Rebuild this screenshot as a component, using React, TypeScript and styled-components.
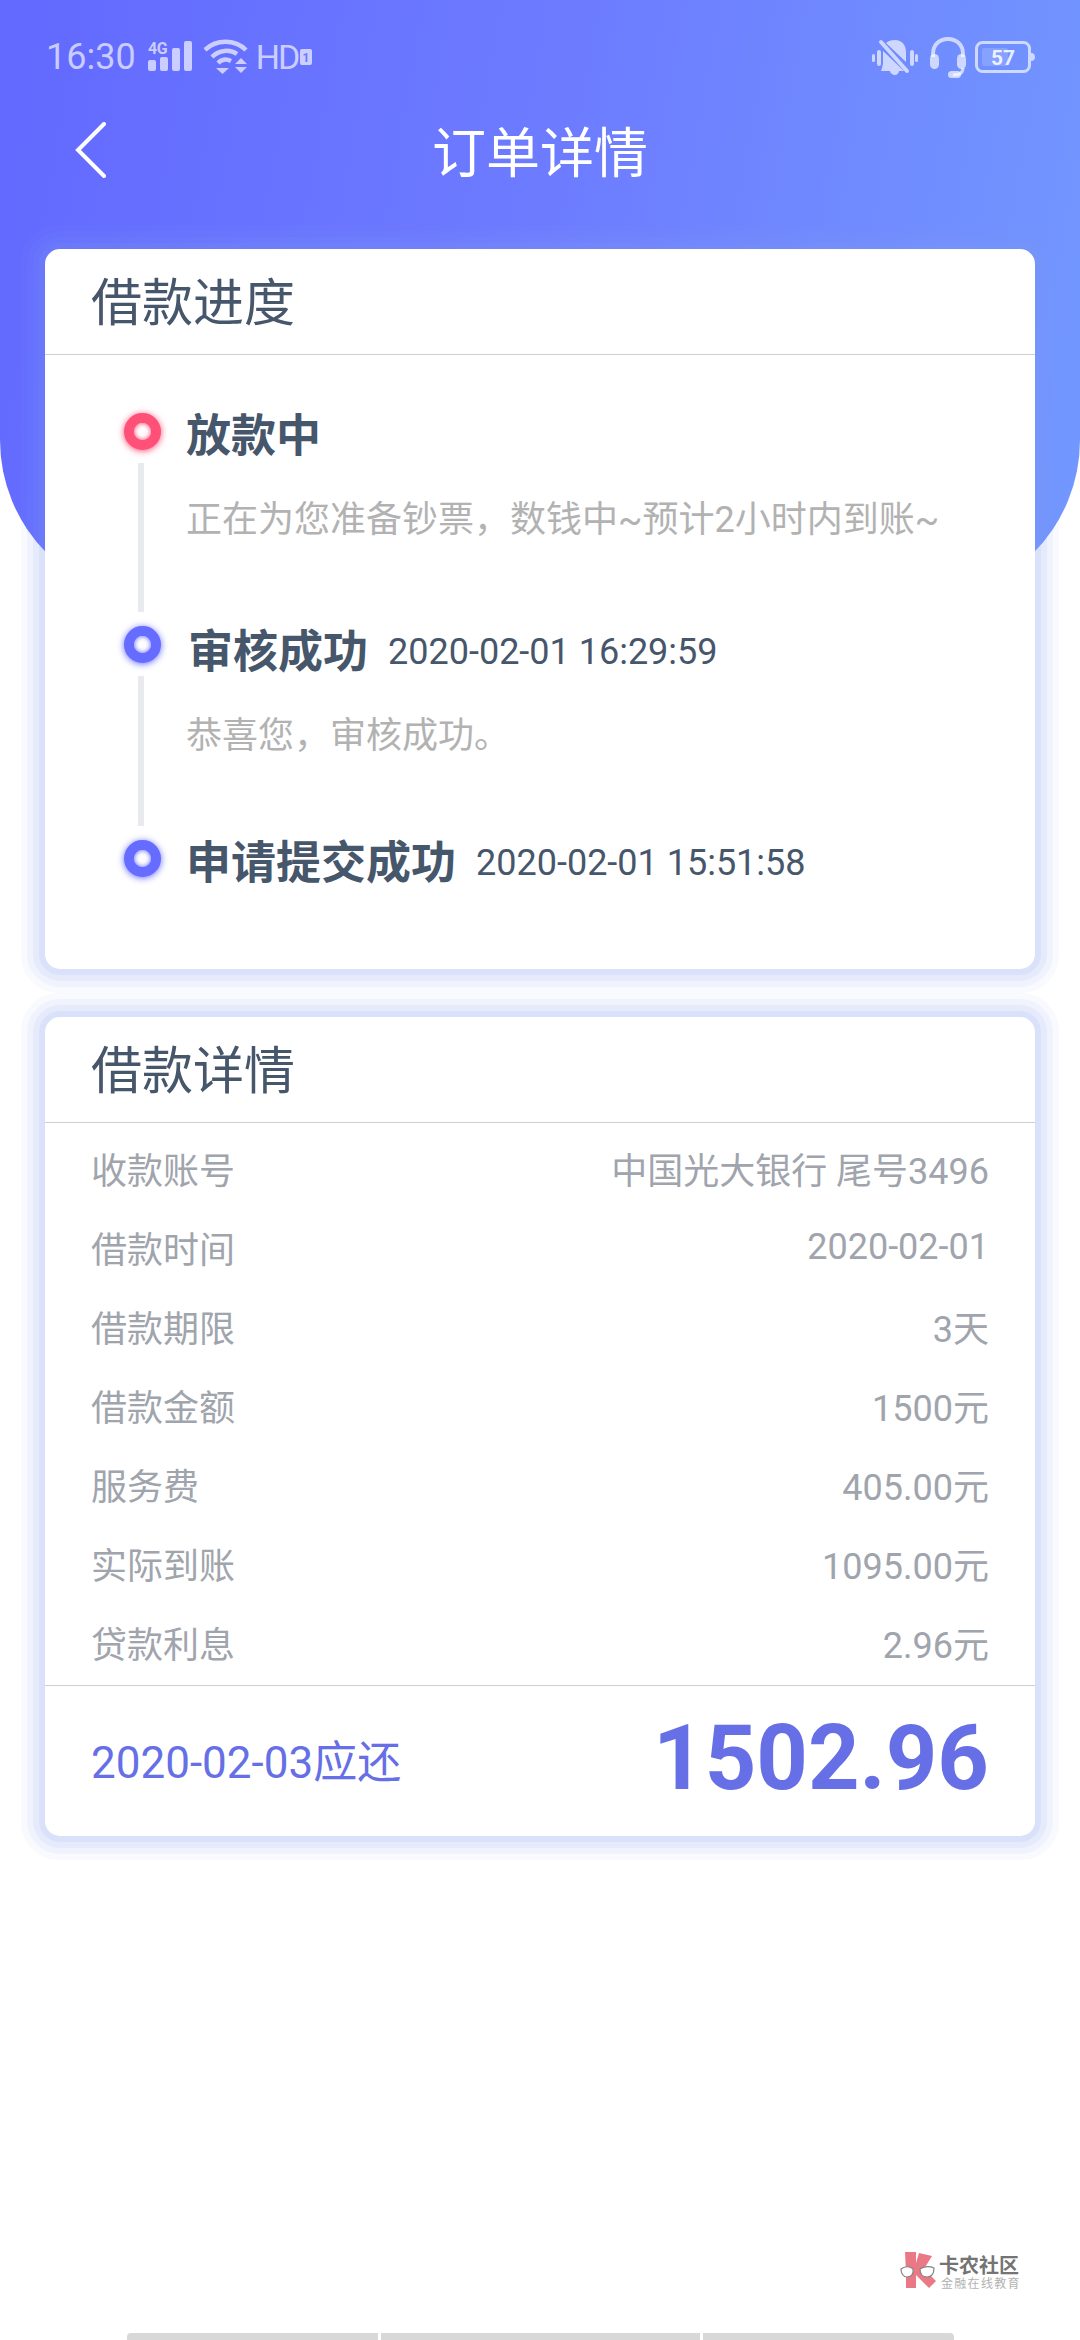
import React from "react";
import styled, { createGlobalStyle } from "styled-components";

const GlobalStyle = createGlobalStyle`
  html, body {
    margin: 0;
    padding: 0;
    background: #fff;
  }
  * {
    box-sizing: border-box;
  }
  body {
    font-family: Roboto, "Noto Sans CJK SC", sans-serif;
  }
`;

const Page = styled.div`
  position: relative;
  width: 1080px;
  height: 2340px;
  overflow: hidden;
  background: #fff;
`;

const Hero = styled.header`
  height: 600px;
  background: linear-gradient(100deg, #6269ff 0%, #6d7cff 50%, #7298ff 100%);
  border-radius: 0 0 160px 160px;
`;

const StatusBar = styled.div`
  height: 114px;
  padding: 0 45px 0 46px;
  display: flex;
  align-items: center;
  justify-content: space-between;
  color: rgba(255, 255, 255, 0.66);
`;

const StatusGroup = styled.div`
  display: flex;
  align-items: center;
  gap: ${(p: { $gap: number }) => p.$gap}px;
`;

const Clock = styled.span`
  font-size: 36px;
  line-height: 1;
`;

const Hd = styled.span`
  font-size: 34px;
  line-height: 1;
  letter-spacing: -2px;
  margin-left: -4px;
`;

const NavBar = styled.nav`
  height: 72px;
  padding: 0 75px;
  display: grid;
  grid-template-columns: 1fr auto 1fr;
  align-items: center;
`;

const PageTitle = styled.h1`
  margin: 0;
  font-family: "Noto Sans CJK SC", sans-serif;
  font-size: 54px;
  font-weight: 400;
  line-height: 72px;
  color: #fff;
`;

const Content = styled.main`
  position: relative;
  margin-top: -351px;
  padding: 0 45px;
  display: flex;
  flex-direction: column;
  gap: 48px;
`;

const Card = styled.section`
  background: #fff;
  border-radius: 15px;
  box-shadow: 0 0 0 6px rgba(130, 160, 240, 0.12),
    0 0 0 12px rgba(130, 160, 240, 0.09), 0 0 0 18px rgba(130, 160, 240, 0.07),
    0 0 0 24px rgba(130, 160, 240, 0.05);
`;

const CardTitle = styled.h2`
  margin: 0;
  height: 106px;
  padding: 0 46px;
  border-bottom: 1.5px solid #cfcfcf;
  font-family: "Noto Sans CJK SC", sans-serif;
  font-size: 51px;
  font-weight: 400;
  line-height: 100px;
  color: #46566b;
`;

const Timeline = styled.div`
  padding: 58px 46px 91px 78px;
`;

const Step = styled.div`
  display: grid;
  grid-template-columns: 38px 1fr;
  column-gap: 25px;
  height: ${(p: { $height: number }) => p.$height}px;
`;

const Rail = styled.div`
  display: flex;
  flex-direction: column;
  align-items: center;
`;

const Dot = styled.span<{ $color: string }>`
  width: 37px;
  height: 37px;
  flex: none;
  border-radius: 50%;
  border: 10px solid ${(p) => p.$color};
  background: #fff;
  box-shadow: 0 1px 7px ${(p) => p.$color}, inset 0 0 5px ${(p) => p.$color};
`;

const RailLine = styled.span`
  width: 6px;
  margin: 13px 0 14px;
  flex: 1;
  background: #e8eaee;
  transform: translateX(-1px);
`;

const StepHead = styled.div<{ $shift?: number }>`
  height: 38px;
  display: flex;
  align-items: center;
  gap: 20px;
  padding-left: ${(p) => (p.$shift ? 2 : 0)}px;
  margin-top: ${(p) => p.$shift ?? 0}px;
`;

const StepTitle = styled.span`
  font-family: "Noto Sans CJK SC", sans-serif;
  font-size: 45px;
  font-weight: 700;
  color: #46566b;
  white-space: nowrap;
`;

const StepTime = styled.span`
  margin-top: 7px;
  font-size: 36px;
  color: #46566b;
  white-space: nowrap;
`;

const StepNote = styled.p`
  margin: 44px 0 0;
  font-family: Roboto, "Noto Sans CJK SC", sans-serif;
  font-size: 36px;
  line-height: 50px;
  color: #b2b2b2;
  white-space: nowrap;
`;

const Rows = styled.div`
  padding: 5px 46px 4px;
`;

const Row = styled.div`
  height: 79px;
  display: flex;
  align-items: center;
  justify-content: space-between;
  font-size: 36px;
  color: #a0a4ac;
`;

const TotalBar = styled.div`
  height: 151px;
  padding: 0 46px 4px;
  border-top: 1.5px solid #cfcfcf;
  display: flex;
  align-items: center;
  justify-content: space-between;
  color: #666fe6;
`;

const DueDate = styled.span`
  font-size: 44px;
`;

const Amount = styled.span`
  font-size: 90px;
  font-weight: 700;
  line-height: 1;
`;

const Watermark = styled.div`
  position: absolute;
  left: 900px;
  top: 2252px;
  display: flex;
  gap: 3px;
  font-family: "Noto Sans CJK SC", sans-serif;
  opacity: 0.9;
`;

const MarkText = styled.div`
  display: flex;
  flex-direction: column;
  padding-top: 2px;
`;

const MarkName = styled.span`
  font-size: 20px;
  font-weight: 700;
  line-height: 21px;
  color: #666;
`;

const MarkSlogan = styled.span`
  margin: 1px 0 0 2px;
  font-size: 12px;
  line-height: 14px;
  letter-spacing: 1.3px;
  color: #aaa;
  white-space: nowrap;
`;

const HomeBar = styled.div`
  position: absolute;
  left: 127px;
  bottom: 0;
  width: 827px;
  height: 7px;
  display: flex;
  gap: 3px;
`;

const HomeSegment = styled.span<{ $grow: number }>`
  flex: ${(p) => p.$grow};
  background: #d8d8d8;
  &:first-child {
    border-radius: 4px 0 0 0;
  }
  &:last-child {
    border-radius: 0 4px 0 0;
  }
`;

const SignalIcon = () => (
  <svg width="44" height="36" viewBox="0 0 44 36" fill="currentColor">
    <text x="0" y="15" fontFamily="Roboto" fontWeight="700" fontSize="16" letterSpacing="-0.5">
      4G
    </text>
    <rect x="0" y="21" width="8" height="11" rx="2" />
    <rect x="12" y="18" width="8" height="14" rx="2" />
    <rect x="24" y="9" width="8" height="23" rx="2" />
    <rect x="36" y="2" width="8" height="30" rx="2" />
  </svg>
);

const WifiIcon = () => (
  <svg width="44" height="36" viewBox="0 0 44 36" fill="none">
    <g stroke="currentColor" strokeWidth="4.5">
      <path d="M1 11C12 0 31 0 42 11" />
      <path d="M8 18C15 11 26 10 33 15" />
      <path d="M14 24C18 20 23 20 27 22" />
    </g>
    <g fill="currentColor">
      <path d="M15 29H28L21.5 35Z" transform="translate(-3 0)" />
      <path d="M37 19L43 25H31Z" />
      <path d="M31 28H43L37 34Z" />
    </g>
  </svg>
);

const SimBadge = () => (
  <svg width="12" height="16" viewBox="0 0 12 16">
    <rect width="12" height="16" rx="2" fill="currentColor" />
    <text x="6" y="13" textAnchor="middle" fontFamily="Roboto" fontWeight="700" fontSize="12" fill="#6a78ff">
      1
    </text>
  </svg>
);

const MuteIcon = () => (
  <svg width="49" height="36" viewBox="0 0 49 36" fill="currentColor">
    <rect x="0" y="15" width="3" height="8" rx="1.5" />
    <rect x="5" y="11" width="4" height="16" rx="2" />
    <rect x="38" y="11" width="4" height="16" rx="2" />
    <rect x="43" y="15" width="3" height="8" rx="1.5" />
    <path d="M23 1c7 0 11 5 11 12v10l-20-19c2-2 5-3 9-3zM11 12l21 20H27c0 2-2 4-4 4s-5-2-5-4h-9c1-3 2-6 2-9z" />
    <path d="M9 3l26 29" stroke="currentColor" strokeWidth="4" strokeLinecap="round" />
  </svg>
);

const HeadsetIcon = () => (
  <svg width="36" height="42" viewBox="0 0 36 42" fill="none">
    <path d="M3 21V18C3 9 9 3 18 3s15 6 15 15v3" stroke="currentColor" strokeWidth="4" />
    <rect x="0" y="18" width="9" height="15" rx="4.5" fill="currentColor" />
    <rect x="27" y="18" width="9" height="15" rx="4.5" fill="currentColor" />
    <path d="M33 32c0 5-4 7-10 7" stroke="currentColor" strokeWidth="3" />
    <rect x="18" y="35" width="13" height="7" rx="3.5" fill="currentColor" />
  </svg>
);

const BatteryIcon = () => (
  <svg width="60" height="33" viewBox="0 0 60 33">
    <rect x="1.5" y="1.5" width="53" height="29" rx="6" fill="none" stroke="currentColor" strokeWidth="3" />
    <rect x="7" y="7" width="26" height="18" rx="2" fill="rgba(255,255,255,0.16)" />
    <path d="M56 12c3 0 4 2 4 4s-1 4-4 4z" fill="currentColor" />
    <text x="28" y="24" textAnchor="middle" fontFamily="Roboto" fontWeight="700" fontSize="21" fill="rgba(255,255,255,0.85)">
      57
    </text>
  </svg>
);

const BackIcon = () => (
  <svg width="32" height="56" viewBox="0 0 32 56" fill="none">
    <path d="M29 2L3 28l26 26" stroke="#fff" strokeWidth="4" strokeLinecap="round" strokeLinejoin="miter" />
  </svg>
);

const MarkLogo = () => (
  <svg width="36" height="36" viewBox="0 0 36 36">
    <path d="M5 0h11v11L19 1l13 3-8 13 12 12-7 7-13-13v13H6V20z" fill="#e96a78" />
    <path d="M1 17c4-3 9-3 12 0 1 5-2 8-6 8s-6-4-6-8zM20 17c4-3 10-3 14-1 0 5-2 9-7 9-4 0-7-3-7-8z" fill="#fff" stroke="#777" strokeWidth="1.2" />
  </svg>
);

const details = [
  ["收款账号", "中国光大银行 尾号3496"],
  ["借款时间", "2020-02-01"],
  ["借款期限", "3天"],
  ["借款金额", "1500元"],
  ["服务费", "405.00元"],
  ["实际到账", "1095.00元"],
  ["贷款利息", "2.96元"],
];

export default function App() {
  return (
    <Page>
      <GlobalStyle />
      <Hero>
        <StatusBar>
          <StatusGroup $gap={12}>
            <Clock>16:30</Clock>
            <SignalIcon />
            <WifiIcon />
            <StatusGroup $gap={2}>
              <Hd>HD</Hd>
              <SimBadge />
            </StatusGroup>
          </StatusGroup>
          <StatusGroup $gap={9}>
            <MuteIcon />
            <HeadsetIcon />
            <BatteryIcon />
          </StatusGroup>
        </StatusBar>
        <NavBar>
          <BackIcon />
          <PageTitle>订单详情</PageTitle>
        </NavBar>
      </Hero>
      <Content>
        <Card>
          <CardTitle>借款进度</CardTitle>
          <Timeline>
            <Step $height={213}>
              <Rail>
                <Dot $color="#ff5078" />
                <RailLine />
              </Rail>
              <div>
                <StepHead>
                  <StepTitle>放款中</StepTitle>
                </StepHead>
                <StepNote>正在为您准备钞票，数钱中~预计2小时内到账~</StepNote>
              </div>
            </Step>
            <Step $height={214}>
              <Rail>
                <Dot $color="#666cff" />
                <RailLine />
              </Rail>
              <div>
                <StepHead $shift={3}>
                  <StepTitle>审核成功</StepTitle>
                  <StepTime>2020-02-01 16:29:59</StepTime>
                </StepHead>
                <StepNote>恭喜您，审核成功。</StepNote>
              </div>
            </Step>
            <Step $height={38}>
              <Rail>
                <Dot $color="#666cff" />
              </Rail>
              <StepHead>
                <StepTitle>申请提交成功</StepTitle>
                <StepTime>2020-02-01 15:51:58</StepTime>
              </StepHead>
            </Step>
          </Timeline>
        </Card>
        <Card>
          <CardTitle>借款详情</CardTitle>
          <Rows>
            {details.map(([label, value]) => (
              <Row key={label}>
                <span>{label}</span>
                <span>{value}</span>
              </Row>
            ))}
          </Rows>
          <TotalBar>
            <DueDate>2020-02-03应还</DueDate>
            <Amount>1502.96</Amount>
          </TotalBar>
        </Card>
      </Content>
      <Watermark>
        <MarkLogo />
        <MarkText>
          <MarkName>卡农社区</MarkName>
          <MarkSlogan>金融在线教育</MarkSlogan>
        </MarkText>
      </Watermark>
      <HomeBar>
        <HomeSegment $grow={251} />
        <HomeSegment $grow={320} />
        <HomeSegment $grow={251} />
      </HomeBar>
    </Page>
  );
}
